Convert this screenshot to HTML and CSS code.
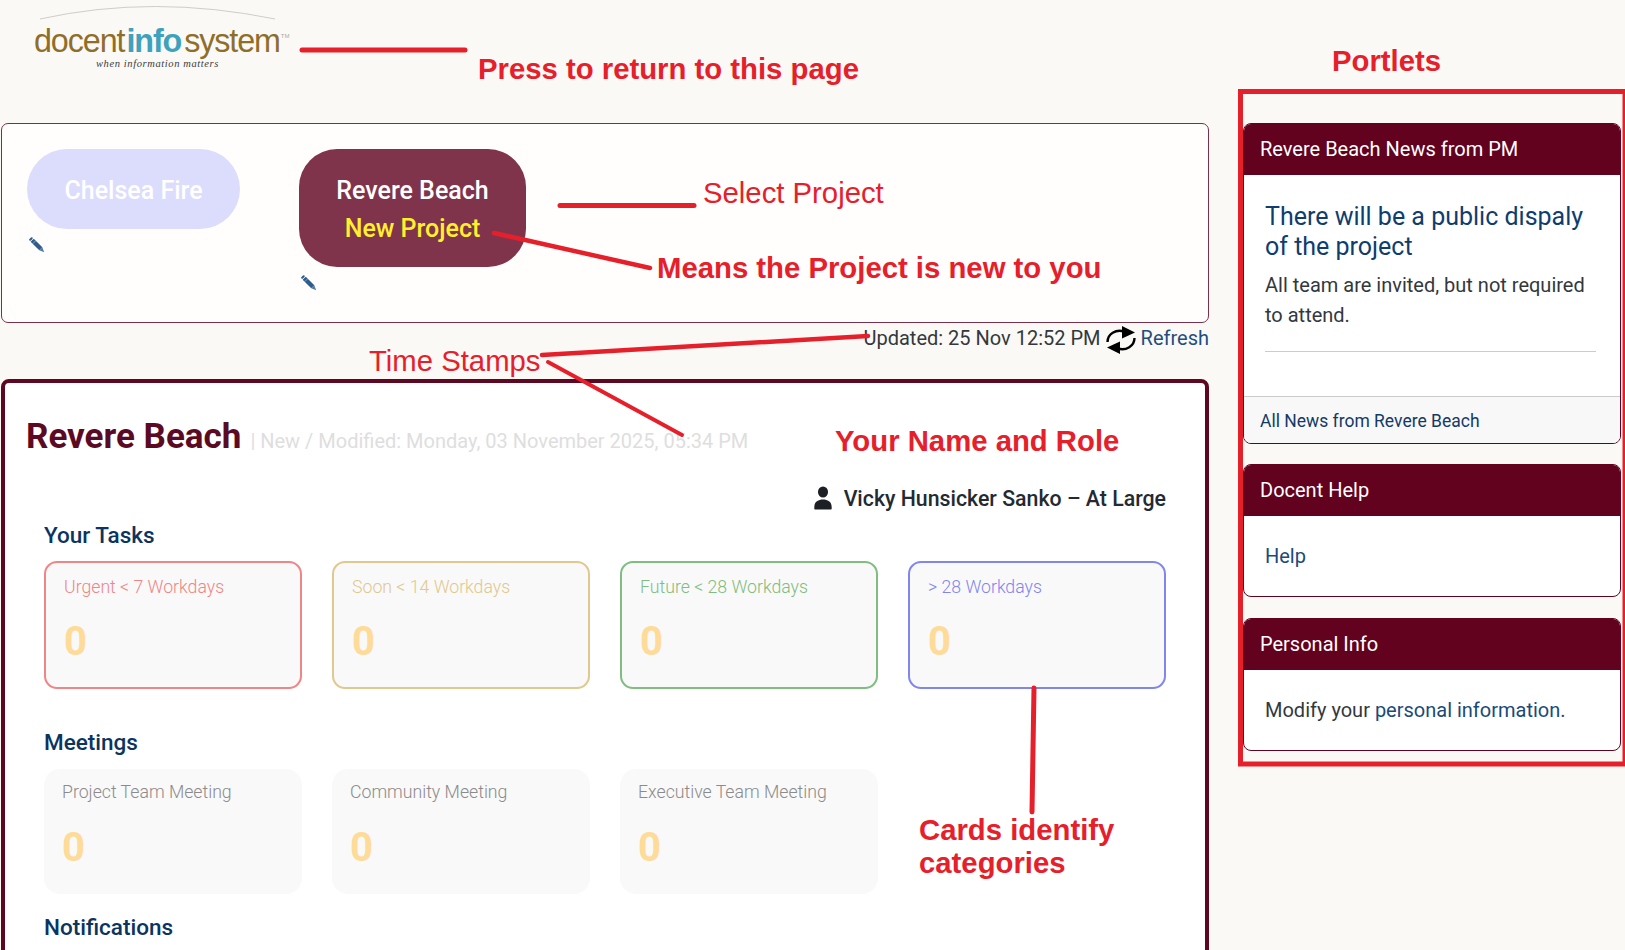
FILE: index.html
```html
<!DOCTYPE html>
<html lang="en">
<head>
<meta charset="utf-8">
<title>Docent Info System</title>
<link rel="stylesheet" href="styles.css">
</head>
<body>
<div class="page">
  <main class="main-col">
    <header class="site-header">
      <a class="logo">
        <svg class="logo-arc" width="250" height="16" viewBox="0 0 250 16"><path d="M5 14 Q118 -11 240 14" fill="none" stroke="#cfcdc9" stroke-width="1"/></svg>
        <div class="logo-word"><span>docent</span><b>info</b><span class="logo-sys">system</span><sup>TM</sup></div>
        <div class="logo-tag">when information matters</div>
      </a>
    </header>

    <section class="project-panel">
      <div class="project">
        <div class="pill pill-muted">Chelsea Fire</div>
        <svg class="pencil" width="16" height="16" viewBox="0 0 16 16"><path d="M3.200 3.200 L11.800 11.800" fill="none" stroke="#2f5c8c" stroke-width="4.400"/><path d="M2.700 1.200 L1.200 2.700" fill="none" stroke="#2f5c8c" stroke-width="2" stroke-linecap="round"/><path d="M3.800 6.600 L6.600 3.800" fill="none" stroke="#fff" stroke-width=".8" opacity=".55"/><path d="M10.300 13.300 L13.300 10.300 L15.200 15.200 Z" fill="#54789f"/></svg>
      </div>
      <div class="project">
        <div class="pill pill-active">Revere Beach<span class="pill-new">New Project</span></div>
        <svg class="pencil" width="16" height="16" viewBox="0 0 16 16"><path d="M3.200 3.200 L11.800 11.800" fill="none" stroke="#2f5c8c" stroke-width="4.400"/><path d="M2.700 1.200 L1.200 2.700" fill="none" stroke="#2f5c8c" stroke-width="2" stroke-linecap="round"/><path d="M3.800 6.600 L6.600 3.800" fill="none" stroke="#fff" stroke-width=".8" opacity=".55"/><path d="M10.300 13.300 L13.300 10.300 L15.200 15.200 Z" fill="#54789f"/></svg>
      </div>
    </section>

    <div class="updated">
      <span>Updated: 25 Nov 12:52 PM</span>
      <svg class="refresh-icon" width="30" height="28" viewBox="0 0 30 28"><path d="M1.500 16 C1.500 8 10 3 18 5.500" fill="none" stroke="#000" stroke-width="2.400"/><path d="M16 0 L29 6.500 L16 12.500 Z" fill="#000"/><path d="M28.500 12 C28.500 20 20 25 12 22.500" fill="none" stroke="#000" stroke-width="2.400"/><path d="M14 28 L1 21.500 L14 15.500 Z" fill="#000"/></svg>
      <a class="refresh-link">Refresh</a>
    </div>

    <section class="dashboard">
      <div class="title-row">
        <h1>Revere Beach</h1>
        <span class="title-meta">| New / Modified: Monday, 03 November 2025, 05:34 PM</span>
      </div>
      <div class="sections">
        <div class="user-row">
          <svg width="18" height="24" viewBox="0 0 20 24" preserveAspectRatio="none"><circle cx="10" cy="6" r="5.600" fill="#1c1f24"/><path d="M1 23.500 C0 23.500 0.400 22 .4 20.500 C.6 15.500 5 13.500 10 13.500 C15 13.500 19.400 15.500 19.600 20.500 C19.600 22 20 23.500 19 23.500 Z" fill="#1c1f24"/></svg>
          <span>Vicky Hunsicker Sanko – At Large</span>
        </div>
        <h2 class="tasks-head">Your Tasks</h2>
        <div class="card-grid">
          <div class="card card-urgent"><div class="card-label">Urgent &lt; 7 Workdays</div><div class="card-num">0</div></div>
          <div class="card card-soon"><div class="card-label">Soon &lt; 14 Workdays</div><div class="card-num">0</div></div>
          <div class="card card-future"><div class="card-label">Future &lt; 28 Workdays</div><div class="card-num">0</div></div>
          <div class="card card-later"><div class="card-label">&gt; 28 Workdays</div><div class="card-num">0</div></div>
        </div>
        <h2 class="meetings-head">Meetings</h2>
        <div class="card-grid">
          <div class="card card-plain"><div class="card-label">Project Team Meeting</div><div class="card-num">0</div></div>
          <div class="card card-plain"><div class="card-label">Community Meeting</div><div class="card-num">0</div></div>
          <div class="card card-plain"><div class="card-label">Executive Team Meeting</div><div class="card-num">0</div></div>
        </div>
        <h2 class="notes-head">Notifications</h2>
      </div>
    </section>
  </main>

  <aside class="side-col">
    <section class="portlet">
      <h3 class="portlet-head">Revere Beach News from PM</h3>
      <div class="portlet-body news-body">
        <h4 class="news-title">There will be a public dispaly of the project</h4>
        <p class="news-text">All team are invited, but not required to attend.</p>
        <hr class="news-rule">
      </div>
      <a class="portlet-foot">All News from Revere Beach</a>
    </section>
    <section class="portlet">
      <h3 class="portlet-head">Docent Help</h3>
      <div class="portlet-body"><a class="link">Help</a></div>
    </section>
    <section class="portlet">
      <h3 class="portlet-head">Personal Info</h3>
      <div class="portlet-body">Modify your <a class="link">personal information.</a></div>
    </section>
  </aside>

  <svg class="marks" width="1625" height="950" viewBox="0 0 1625 950">
    <g stroke="#e6202b" fill="none" stroke-linecap="round">
      <path d="M302 50 H465" stroke-width="5"/>
      <path d="M560 205.500 H694" stroke-width="5"/>
      <path d="M494 233 L650 268" stroke-width="4.500"/>
      <path d="M542 355 L868 336" stroke-width="4.500"/>
      <path d="M548 362 L682 435" stroke-width="4"/>
      <path d="M1034 688 L1032 812" stroke-width="5"/>
      <rect x="1240.500" y="91.500" width="384.500" height="672.500" stroke-width="5" stroke-linecap="butt"/>
    </g>
  </svg>
  <div class="note note-b note-press">Press to return to this page</div>
  <div class="note note-b note-portlets">Portlets</div>
  <div class="note note-select">Select Project</div>
  <div class="note note-b note-means">Means the Project is new to you</div>
  <div class="note note-time">Time Stamps</div>
  <div class="note note-b note-role">Your Name and Role</div>
  <div class="note note-b note-cards">Cards identify<br>categories</div>
</div>
</body>
</html>
```

FILE: styles.css
```css
* { box-sizing: border-box; }
html, body { margin: 0; height: 950px; overflow: hidden; }
body {
  background: #fbf9f6;
  font-family: Roboto, "Liberation Sans", sans-serif;
  color: #333;
}
.page {
  position: relative;
  display: grid;
  grid-template-columns: 1209px 1fr;
  height: 950px;
  overflow: hidden;
}
.main-col { padding-left: 1px; min-width: 0; }

/* logo */
.site-header { height: 123px; padding: 5px 0 0 33px; }
.logo { display: block; width: 260px; }
.logo-arc { display: block; margin-left: 1px; }
.logo-word {
  font-family: "Liberation Sans", sans-serif;
  font-size: 32.300px;
  line-height: 36px;
  margin-top: 2px;
  color: #8f6e2a;
  letter-spacing: -1.100px;
  white-space: nowrap;
  display: flex;
  align-items: baseline;
}
.logo-word b { color: #3fa2bc; font-weight: 700; margin-left: 2px; }
.logo-sys { margin-left: 3px; }
.logo-word sup { font-size: 6px; letter-spacing: 0; color: #aaa; align-self: flex-start; margin: 9px 0 0 1px; line-height: 8px; }
.logo-tag {
  font-family: "Liberation Serif", serif;
  font-style: italic;
  font-size: 10.500px;
  line-height: 12px;
  letter-spacing: .6px;
  color: #3c3c40;
  margin: -1px 0 0 62px;
  white-space: nowrap;
}

/* project selector */
.project-panel {
  height: 200px;
  display: flex;
  gap: 59px;
  padding: 25px 25px 0;
  background: #fffefd;
  border: 1px solid #7a3048;
  border-radius: 7px;
}
.project { display: flex; flex-direction: column; align-items: flex-start; gap: 8px; }
.pill {
  display: flex;
  flex-direction: column;
  align-items: center;
  justify-content: center;
  padding-top: 4px;
  font-size: 25px;
  font-weight: 500;
  line-height: 38px;
  color: #fff;
}
.pill-muted { width: 213px; height: 80px; border-radius: 40px; background: #dcdcfc; }
.pill-active { width: 227px; height: 118px; border-radius: 38px; background: #80344c; }
.pill-new { color: #fff02e; }
.pencil { margin-left: 2px; }

/* updated */
.updated {
  height: 56px;
  display: flex;
  justify-content: flex-end;
  align-items: flex-start;
  gap: 5px;
  padding: 1px 0 0;
  font-size: 20px;
  line-height: 28px;
  color: #33383d;
}
.refresh-icon { margin-top: 2px; }
.refresh-link { color: #1f4e80; }

/* dashboard */
.dashboard {
  height: 640px;
  padding: 34px 39px 0 21px;
  background: #fff;
  border: 4px solid #5f0620;
  border-radius: 8px;
}
.title-row { display: flex; align-items: baseline; gap: 9px; height: 40px; }
h1 { margin: 0; font-size: 35px; line-height: 40px; font-weight: 700; color: #5c0a24; white-space: nowrap; }
.title-meta { font-size: 20px; color: #dedede; white-space: nowrap; }
.sections { padding-left: 18px; }
.user-row {
  display: flex;
  justify-content: flex-end;
  align-items: center;
  gap: 12px;
  height: 30px;
  margin-top: 26px;
  font-size: 21.300px;
  font-weight: 500;
  color: #232a31;
}
h2 { margin: 0; font-size: 22.500px; line-height: 30px; font-weight: 500; color: #0b3460; }
.tasks-head { margin: 7px 0 11px; }
.meetings-head { margin: 38px 0 12px; }
.notes-head { margin-top: 18px; }
.card-grid { display: grid; grid-template-columns: repeat(4, 258px); gap: 30px; }
.card {
  height: 128px;
  padding: 12px 18px;
  background: #f9f9f9;
  border: 2px solid;
  border-radius: 13px;
}
.card-label { font-size: 17.700px; line-height: 24px; font-weight: 300; }
.card-num { margin-top: 21px; font-size: 40px; line-height: 44px; font-weight: 700; color: #fedb98; }
.card-urgent { border-color: #f08585; color: #f08585; }
.card-soon { border-color: #e0c88e; color: #e0c88e; }
.card-future { border-color: #7fbd80; color: #7fbd80; }
.card-later { border-color: #8186ee; color: #8186ee; }
.card-plain { height: 125px; border: 0; padding: 11px 18px; color: #8b8b8b; border-radius: 16px; }
.card-plain .card-num { margin-top: 22px; }

/* portlets */
.side-col {
  padding: 123px 4px 0 34px;
  display: flex;
  flex-direction: column;
  gap: 21px;
}
.portlet {
  background: #fff;
  border: 1px solid #62021f;
  border-radius: 8px;
  overflow: hidden;
  font-size: 20px;
}
.portlet:first-child { margin-bottom: -1px; }
.portlet-head {
  margin: 0;
  height: 51px;
  padding: 0 16px;
  font-size: 20px;
  font-weight: 400;
  line-height: 51px;
  color: #fff;
  background: #62021f;
}
.portlet-body { height: 80px; padding: 25px 21px 0; line-height: 30px; color: #33383d; }
.news-body { height: 221px; padding-top: 27px; }
.news-title { margin: 0; font-size: 25px; line-height: 30px; font-weight: 400; color: #0f3d6e; }
.news-text { margin: 8px 0 0; }
.news-rule { margin: 21px 3px 0 0; border: 0; border-top: 1px solid #ccc; }
.portlet-foot {
  display: block;
  height: 47px;
  padding: 1px 16px 0;
  font-size: 17.500px;
  line-height: 47px;
  color: #143a66;
  background: #f8f8f8;
  border-top: 1px solid #ccc;
}
.link { color: #1a4a7a; }

/* annotation layer */
.marks { position: absolute; left: 0; top: 0; pointer-events: none; }
.note {
  position: absolute;
  font-family: "Liberation Sans", sans-serif;
  font-size: 29.300px;
  line-height: 34px;
  color: #e6202b;
  white-space: nowrap;
}
.note-b { font-weight: 700; }
.note-press { left: 478px; top: 52px; }
.note-portlets { left: 1332px; top: 44px; }
.note-select { left: 703px; top: 176px; }
.note-means { left: 657px; top: 251px; }
.note-time { left: 369px; top: 344px; }
.note-role { left: 835px; top: 424px; }
.note-cards { left: 919px; top: 813px; line-height: 33px; }
```
